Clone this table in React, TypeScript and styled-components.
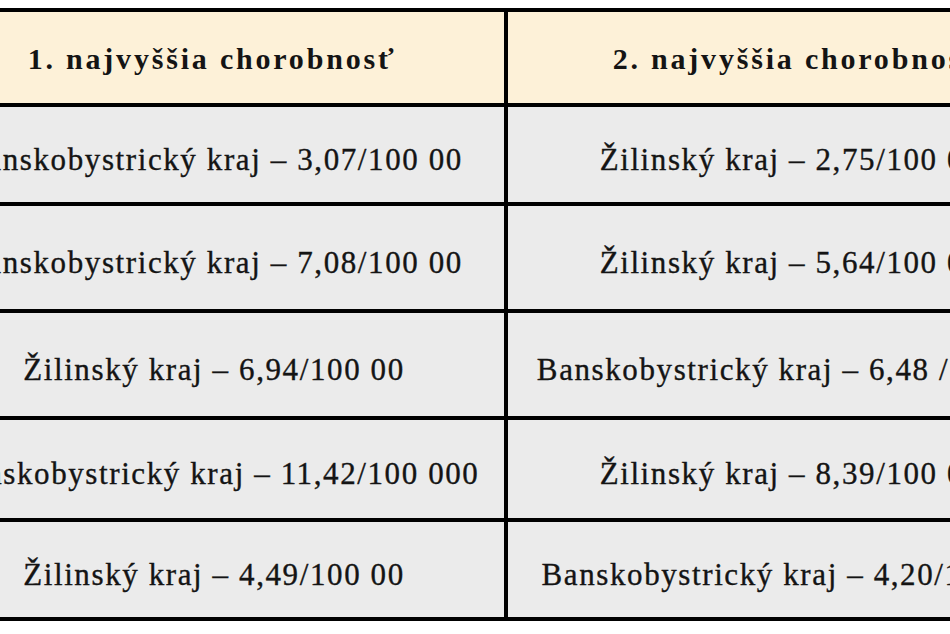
import React from "react";
import styled, { createGlobalStyle } from "styled-components";

const GlobalStyle = createGlobalStyle`
  html, body {
    margin: 0;
    padding: 0;
    background: #ffffff;
  }
  * {
    box-sizing: border-box;
  }
`;

const Page = styled.div`
  width: 950px;
  height: 634px;
  overflow: hidden;
  padding-top: 8px;
  background: #ffffff;
  font-family: "Liberation Serif", "Times New Roman", serif;
  color: #141414;
`;

// the screenshot is a crop, so the table runs past both edges
const Table = styled.div`
  display: grid;
  grid-template-columns: 588px 582px;
  width: 1174px;
  margin-left: -84px;
  border-top: 4px solid #000;
  border-left: 4px solid #000;
`;

const Cell = styled.div<{ $head?: boolean; $h: number }>`
  height: ${(p) => p.$h}px;
  display: flex;
  align-items: center;
  justify-content: center;
  white-space: nowrap;
  border-right: 4px solid #000;
  border-bottom: 4px solid #000;
  background: ${(p) => (p.$head ? "#fdf1d8" : "#ebebeb")};
  font-size: ${(p) => (p.$head ? "30px" : "31px")};
  font-weight: ${(p) => (p.$head ? 700 : 400)};
  letter-spacing: ${(p) => (p.$head ? "2.8px" : "1.6px")};
  -webkit-text-stroke: ${(p) => (p.$head ? "0" : "0.35px")} #141414;
  padding-top: ${(p) => (p.$head ? "2px" : "10px")};
  padding-left: ${(p) => (p.$head ? "0" : "4px")};
`;

const head = ["1. najvyššia chorobnosť", "2. najvyššia chorobnosť"];

const rows: { h: number; cells: [string, string] }[] = [
  { h: 99, cells: ["Banskobystrický kraj – 3,07/100 00", "Žilinský kraj – 2,75/100 000"] },
  { h: 107, cells: ["Banskobystrický kraj – 7,08/100 00", "Žilinský kraj  – 5,64/100 000"] },
  { h: 107, cells: ["Žilinský kraj – 6,94/100 00", "Banskobystrický kraj – 6,48 /100 000"] },
  { h: 102, cells: ["Banskobystrický kraj – 11,42/100 000", "Žilinský kraj – 8,39/100 000"] },
  { h: 99, cells: ["Žilinský kraj  – 4,49/100 00", "Banskobystrický kraj – 4,20/100 000"] },
];

export default function App() {
  return (
    <>
      <GlobalStyle />
      <Page>
        <Table>
          {head.map((t) => (
            <Cell key={t} $head $h={95}>
              {t}
            </Cell>
          ))}
          {rows.map((r, i) =>
            r.cells.map((c, j) => (
              <Cell key={`${i}-${j}`} $h={r.h}>
                {c}
              </Cell>
            ))
          )}
        </Table>
      </Page>
    </>
  );
}
